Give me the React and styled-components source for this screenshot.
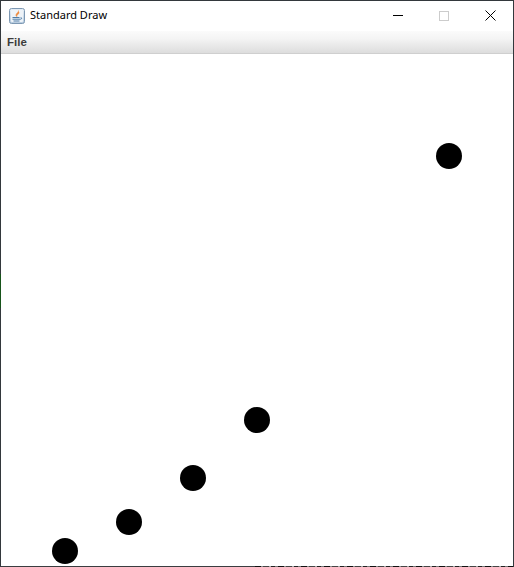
import React from "react";
import styled, { createGlobalStyle } from "styled-components";

const Global = createGlobalStyle`
  html, body { margin: 0; padding: 0; background: #fff; overflow: hidden; }
  #root { width: 514px; height: 567px; }
`;

const Frame = styled.div`
  position: relative;
  box-sizing: border-box;
  width: 514px;
  height: 567px;
  display: flex;
  flex-direction: column;
  border: 1px solid #33383c;
  border-bottom: 0;
  background: #fff;
`;

const SideAccent = styled.div`
  position: absolute;
  left: -1px;
  top: 273px;
  width: 1px;
  height: 34px;
  background: #17541a;
`;

const TitleBar = styled.header`
  display: flex;
  align-items: flex-start;
  height: 30px;
  flex: none;
  padding-left: 8px;
  background: #fff;
`;

const AppIcon = styled.svg`
  width: 16px;
  height: 16px;
  flex: none;
  margin: 7px 5px 0 0;
`;

const Title = styled.span`
  flex: 1;
  font-family: "Noto Sans", "Open Sans", sans-serif;
  font-size: 11px;
  line-height: 28px;
  color: #000;
`;

const WinButton = styled.button`
  width: 46px;
  height: 29px;
  padding: 0;
  border: 0;
  background: none;
  display: flex;
  align-items: center;
  justify-content: center;
  svg { display: block; }
`;

const MenuBar = styled.nav`
  display: flex;
  align-items: center;
  height: 23px;
  flex: none;
  padding: 0 0 1px 6px;
  box-sizing: border-box;
  background: linear-gradient(#fbfbfb 0%, #f4f4f4 35%, #dddddd 100%);
  border-bottom: 1px solid #cfcfcf;
`;

const MenuItem = styled.span`
  font-family: "Liberation Sans", Arial, sans-serif;
  font-size: 11.5px;
  font-weight: 700;
  color: #3c3c3c;
`;

const Canvas = styled.main`
  position: relative;
  flex: 1;
  background: #fff;
`;

const Dot = styled.div`
  position: absolute;
  width: 26px;
  height: 26px;
  margin: -13px 0 0 -13px;
  border-radius: 50%;
  background: #000;
`;

const BottomEdge = styled.div`
  display: flex;
  height: 1px;
  flex: none;
  background: #3a3d40;
`;

const BottomFragments = styled.div`
  margin-left: 254px;
  width: 258px;
  background: repeating-linear-gradient(
    90deg,
    #111 0 6px,
    #8a8a8a 6px 8px,
    #444 8px 14px,
    #a5a5a5 14px 16px,
    #222 16px 20px,
    #777 20px 23px
  );
`;

const dots = [
  [449, 156],
  [257, 420],
  [193, 478],
  [129, 522],
  [65, 551],
];

export default function App() {
  return (
    <>
      <Global />
      <Frame>
        <SideAccent />
        <TitleBar>
          <AppIcon viewBox="0 0 16 16">
            <defs>
              <linearGradient id="ig" x1="0" y1="0" x2="0" y2="1">
                <stop offset="0" stopColor="#e6eef6" />
                <stop offset="1" stopColor="#b5cade" />
              </linearGradient>
            </defs>
            <rect x="0.5" y="0.5" width="15" height="15" rx="2" fill="url(#ig)" stroke="#7d98b3" />
            <rect x="2" y="2" width="12" height="12" rx="1" fill="#eef3f8" />
            <path d="M9.5 2.5C10 4.5 6.5 5.5 7 7.5 7.2 8.3 8 8.6 8 8.6 7 7 10.5 6 10 4.2" fill="#ee8a3c" stroke="#ee8a3c" strokeWidth="0.6" />
            <path d="M3.5 9.5h7M3.5 11.2h8c1.5 0 1.5-1.7 .2-1.7M4.5 13h6" fill="none" stroke="#4f7da8" strokeWidth="1" />
          </AppIcon>
          <Title>Standard Draw</Title>
          <WinButton aria-label="Minimize">
            <svg width="10" height="10" viewBox="0 0 10 10"><path d="M0 4.5h11" stroke="#000" strokeWidth="1" /></svg>
          </WinButton>
          <WinButton aria-label="Maximize">
            <svg width="10" height="10" viewBox="0 0 10 10"><rect x="0.5" y="0.5" width="9" height="9" fill="none" stroke="#ccc" /></svg>
          </WinButton>
          <WinButton aria-label="Close">
            <svg width="11" height="11" viewBox="0 0 11 11"><path d="M0.5 0.5l10 10M10.5 0.5l-10 10" stroke="#000" strokeWidth="1" fill="none" /></svg>
          </WinButton>
        </TitleBar>
        <MenuBar>
          <MenuItem>File</MenuItem>
        </MenuBar>
        <Canvas>
          {dots.map(([x, y]) => (
            <Dot key={x} style={{ left: x - 1, top: y - 54 }} />
          ))}
        </Canvas>
        <BottomEdge>
          <BottomFragments />
        </BottomEdge>
      </Frame>
    </>
  );
}
